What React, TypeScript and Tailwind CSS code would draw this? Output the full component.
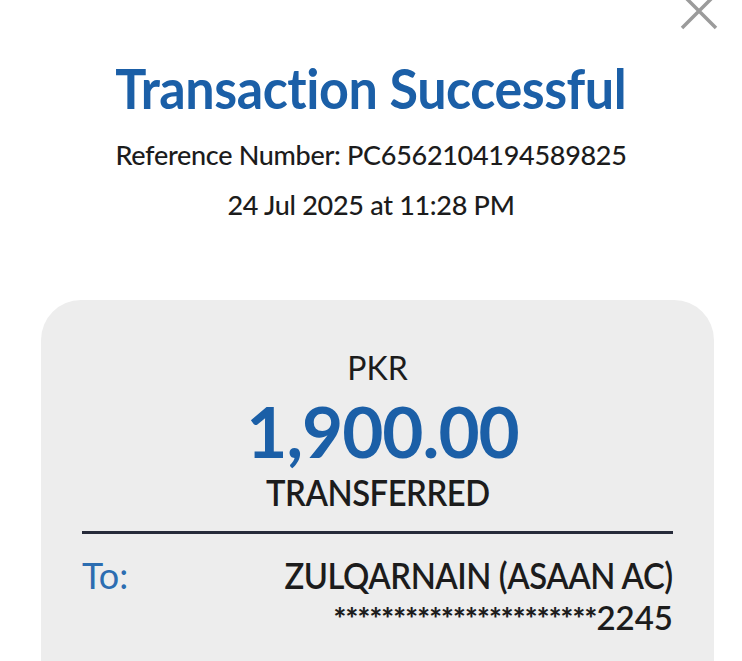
export default function App() {
  return (
    <div className="relative h-[661px] w-[742px] overflow-hidden bg-white font-['Lato',sans-serif] text-[#1c1c1c]">
      <button className="absolute left-[680px] top-[-8px] h-[38px] w-[38px]" aria-label="Close">
        <svg viewBox="0 0 38 38" className="h-full w-full" fill="none" stroke="#9b9b9b" strokeWidth="3.5">
          <path d="M2 2L36 36M36 2L2 36" />
        </svg>
      </button>

      <div className="flex flex-col items-center pt-[60px] text-center">
        <h1 className="scale-x-[0.93] text-[56px] leading-none font-bold tracking-[-0.5px] text-[#1b5fa7]">
          Transaction Successful
        </h1>
        <p className="mt-[25px] text-[27px] leading-none font-medium tracking-[-0.3px]">Reference Number: PC6562104194589825</p>
        <p className="mt-[23px] text-[27px] leading-none font-medium tracking-[-0.3px]">24 Jul 2025 at 11:28 PM</p>
      </div>

      <section className="mt-[82px] ml-[41px] h-[400px] w-[673px] rounded-[40px] bg-[#ededed] px-[41px] pt-[52px]">
        <div className="flex flex-col items-center text-center">
          <span className="text-[32px] leading-none">PKR</span>
          <span className="mt-[11px] translate-x-[5px] text-[71px] leading-none font-bold tracking-[-1px] text-[#1b5fa7]">
            1,900.00
          </span>
          <span className="mt-[8px] scale-x-[0.91] text-[36px] leading-none font-semibold tracking-[-0.5px]">TRANSFERRED</span>
        </div>
        <div className="mt-[21px] h-[3px] bg-[#262b3a]" />
        <div className="mt-[23px] flex justify-between">
          <span className="text-[36px] leading-none text-[#2c6db1]">To:</span>
          <div className="flex flex-col items-end">
            <span className="origin-right scale-x-[0.91] text-[36px] leading-none font-semibold tracking-[-0.5px]">
              ZULQARNAIN (ASAAN AC)
            </span>
            <span className="mt-[8px] text-[33px] leading-none font-semibold">
              <span className="text-[30px] font-black tracking-[-0.8px]">**********************</span>2245
            </span>
          </div>
        </div>
      </section>
    </div>
  )
}
